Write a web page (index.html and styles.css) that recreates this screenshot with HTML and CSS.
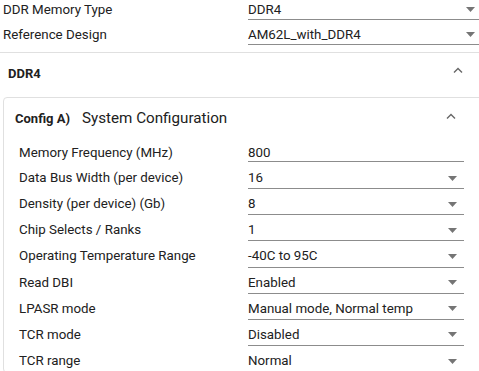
FILE: index.html
```html
<!DOCTYPE html>
<html lang="en">
<head>
  <meta charset="UTF-8">
  <title>DDR Configuration</title>
  <link rel="stylesheet" href="styles.css">
</head>
<body>

  <div class="top">
    <div class="top-row">
      <span class="label">DDR Memory Type</span>
      <div class="select top-select"><span>DDR4</span><svg class="caret" viewBox="0 0 9 5"><polygon points="0,0 9,0 4.5,5"/></svg></div>
    </div>
    <div class="top-row">
      <span class="label">Reference Design</span>
      <div class="select top-select"><span>AM62L_with_DDR4</span><svg class="caret" viewBox="0 0 9 5"><polygon points="0,0 9,0 4.5,5"/></svg></div>
    </div>
  </div>

  <div class="section-head">
    <span class="section-title">DDR4</span>
    <svg class="chevron" viewBox="0 0 10 6"><polyline points="1,5.5 5,1.5 9,5.5"/></svg>
  </div>

  <div class="card">
    <div class="card-head">
      <span class="tag">Config A)</span>
      <span class="card-title">System Configuration</span>
      <svg class="chevron" viewBox="0 0 10 6"><polyline points="1,5.5 5,1.5 9,5.5"/></svg>
    </div>

    <div class="fields">
      <span class="label first">Memory Frequency (MHz)</span>
      <div class="select text-field first"><span>800</span></div>

      <span class="label">Data Bus Width (per device)</span>
      <div class="select"><span>16</span><svg class="caret" viewBox="0 0 9 5"><polygon points="0,0 9,0 4.5,5"/></svg></div>

      <span class="label">Density (per device) (Gb)</span>
      <div class="select"><span>8</span><svg class="caret" viewBox="0 0 9 5"><polygon points="0,0 9,0 4.5,5"/></svg></div>

      <span class="label">Chip Selects / Ranks</span>
      <div class="select"><span>1</span><svg class="caret" viewBox="0 0 9 5"><polygon points="0,0 9,0 4.5,5"/></svg></div>

      <span class="label">Operating Temperature Range</span>
      <div class="select"><span>-40C to 95C</span><svg class="caret" viewBox="0 0 9 5"><polygon points="0,0 9,0 4.5,5"/></svg></div>

      <span class="label">Read DBI</span>
      <div class="select"><span>Enabled</span><svg class="caret" viewBox="0 0 9 5"><polygon points="0,0 9,0 4.5,5"/></svg></div>

      <span class="label">LPASR mode</span>
      <div class="select"><span>Manual mode, Normal temp</span><svg class="caret" viewBox="0 0 9 5"><polygon points="0,0 9,0 4.5,5"/></svg></div>

      <span class="label">TCR mode</span>
      <div class="select"><span>Disabled</span><svg class="caret" viewBox="0 0 9 5"><polygon points="0,0 9,0 4.5,5"/></svg></div>

      <span class="label">TCR range</span>
      <div class="select"><span>Normal</span><svg class="caret" viewBox="0 0 9 5"><polygon points="0,0 9,0 4.5,5"/></svg></div>
    </div>
  </div>

</body>
</html>
```

FILE: styles.css
```css
body {
  margin: 0;
  overflow: hidden;
  font-family: Roboto, "Liberation Sans", sans-serif;
  font-size: 13.33px;
  color: #212121;
  background-color: #fff;
}

/* top selectors */
.top {
  padding: 0 0 2px 3px;
  border-bottom: 1px solid #e0e0e0;
}

.top-row {
  display: grid;
  grid-template-columns: 245px 1fr;
  height: 25px;
}

.top-row .label {
  line-height: 19px;
}

.select {
  display: flex;
  align-items: center;
  border-bottom: 1px solid #8c8c8c;
  box-sizing: border-box;
}

.select span {
  flex: 1;
}

.top-select {
  height: 20px;
  line-height: 19px;
}

.caret {
  width: 9px;
  height: 5px;
  fill: #757575;
  margin-right: 7px;
}

.top-select .caret {
  margin-right: 4px;
}

.chevron {
  width: 10px;
  height: 6px;
  fill: none;
  stroke: #666;
  stroke-width: 1.4;
}

/* DDR4 section header */
.section-head {
  display: flex;
  align-items: center;
  height: 44px;
  padding: 0 16px 4px 8px;
  box-sizing: border-box;
}

.section-title {
  flex: 1;
  font-size: 13px;
  font-weight: bold;
}

.section-head .chevron {
  margin-bottom: 6px;
}

/* card */
.card {
  margin: 0 -10px 0 3px;
  border: 1px solid #e0e0e0;
  border-radius: 4px;
}

.card-head {
  display: flex;
  align-items: center;
  height: 40px;
  padding: 0 32px 0 11px;
}

.tag {
  font-size: 13px;
  font-weight: bold;
}

.card-title {
  flex: 1;
  margin-left: 12px;
  font-size: 15.2px;
}

.card-head .chevron {
  margin-bottom: 4px;
}

.fields {
  display: grid;
  grid-template-columns: 229px 216px;
  padding: 0 15px;
}

.fields .label {
  height: 26.15px;
  padding-top: 5px;
  line-height: 20px;
  box-sizing: border-box;
}

.fields .select {
  height: 26.15px;
  padding-top: 5px;
  line-height: 20px;
}

.fields .label.first {
  height: 24px;
  padding-top: 7px;
  line-height: 16px;
  margin-bottom: 1px;
}

.fields .text-field {
  height: 24px;
  padding-top: 7px;
  line-height: 16px;
  margin-bottom: 1px;
}
```
